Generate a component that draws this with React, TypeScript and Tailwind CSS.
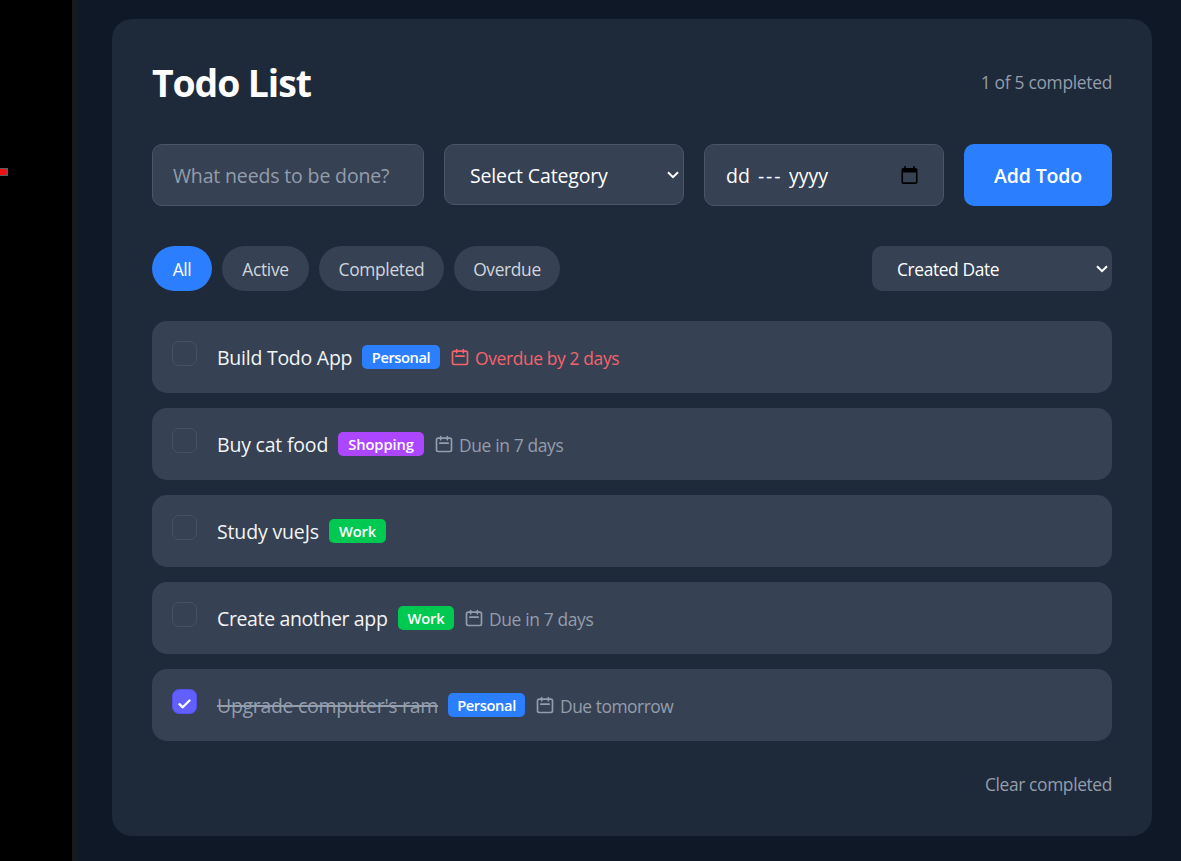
import type { ReactNode } from "react";

type Todo = {
  title: string;
  titleClass: string;
  tag?: string;
  tagClass?: string;
  due?: string;
  dueClass?: string;
  done?: boolean;
};

const todos: Todo[] = [
  {
    title: "Build Todo App",
    titleClass: "w-[135px] tracking-[-0.25px] text-gray-100",
    tag: "Personal",
    tagClass: "w-[78px] bg-[#2b7fff] tracking-[-0.45px]",
    due: "Overdue by 2 days",
    dueClass: "tracking-[-0.36px] text-[#f4646c]",
  },
  {
    title: "Buy cat food",
    titleClass: "w-[111px] tracking-[-0.2px] text-gray-100",
    tag: "Shopping",
    tagClass: "w-[86px] bg-[#ad46ff] tracking-[-0.1px]",
    due: "Due in 7 days",
    dueClass: "tracking-[-0.35px] text-[#949dab]",
  },
  {
    title: "Study vueJs",
    titleClass: "w-[102px] tracking-[-0.15px] text-gray-100",
    tag: "Work",
    tagClass: "w-[57px] bg-[#00c951] tracking-[-0.2px]",
  },
  {
    title: "Create another app",
    titleClass: "w-[171px] tracking-[-0.37px] text-gray-100",
    tag: "Work",
    tagClass: "w-[56px] bg-[#00c951] tracking-[-0.2px]",
    due: "Due in 7 days",
    dueClass: "tracking-[-0.35px] text-[#949dab]",
  },
  {
    title: "Upgrade computer's ram",
    titleClass: "w-[221px] tracking-[-0.31px] text-[#949dab] line-through decoration-2",
    tag: "Personal",
    tagClass: "w-[77px] bg-[#2b7fff] tracking-[-0.4px]",
    due: "Due tomorrow",
    dueClass: "tracking-[-0.47px] text-[#949dab]",
    done: true,
  },
];

function Chevron() {
  return (
    <svg className="h-[8px] w-[12px] shrink-0" viewBox="0 0 12 8" fill="none" stroke="white" strokeWidth="2">
      <path d="M1 1.2 6 6.2 11 1.2" />
    </svg>
  );
}

function CalendarIcon() {
  return (
    <svg className="size-5 shrink-0" viewBox="0 0 24 24" fill="none" stroke="currentColor" strokeWidth="2" strokeLinecap="round" strokeLinejoin="round">
      <path d="M8 7V3m8 4V3m-9 8h10M5 21h14a2 2 0 002-2V7a2 2 0 00-2-2H5a2 2 0 00-2 2v12a2 2 0 002 2z" />
    </svg>
  );
}

function PickerIcon() {
  return (
    <svg className="h-[18px] w-[17px] shrink-0" viewBox="0 0 17 19" fill="black">
      <path fillRule="evenodd" d="M3 0h1.6v2h7.8V0H14v2h1a2 2 0 012 2v13a2 2 0 01-2 2H2a2 2 0 01-2-2V4a2 2 0 012-2h1zM1.7 6.8v10.4h13.6V6.8z" />
    </svg>
  );
}

function Pill({ children, className }: { children: ReactNode; className: string }) {
  return (
    <button className={`h-[45px] rounded-full pt-[2px] text-center text-[17.4px] tracking-[-0.35px] whitespace-nowrap ${className}`}>
      {children}
    </button>
  );
}

function TodoRow({ todo }: { todo: Todo }) {
  return (
    <li className="flex h-[72px] items-start rounded-[15px] bg-[#364153] pl-5">
      <span
        className={`mt-5 flex size-[25px] shrink-0 items-center justify-center rounded-[7px] border ${
          todo.done ? "border-[#5550e8] bg-[#615fff]" : "border-[#465164]"
        }`}
      >
        {todo.done && (
          <svg className="mt-[5px] h-[10px] w-[13px]" viewBox="0 0 13 10" fill="none" stroke="white" strokeWidth="2.3" strokeLinecap="round" strokeLinejoin="round">
            <path d="M1.5 5.2 4.7 8.3 11.5 1.5" />
          </svg>
        )}
      </span>
      <div className="ml-5 flex h-[72px] items-center">
        <span className={`pt-[2px] text-[19.5px] leading-[30px] whitespace-nowrap ${todo.titleClass}`}>
          {todo.title}
        </span>
        {todo.tag && (
          <span
            className={`ml-[10px] flex h-6 items-center justify-center rounded-[5px] pt-px text-[14.7px] font-semibold text-white ${todo.tagClass}`}
          >
            {todo.tag}
          </span>
        )}
        {todo.due && (
          <span className={`ml-[10px] flex items-center gap-[5px] text-[17.4px] whitespace-nowrap ${todo.dueClass}`}>
            <CalendarIcon />
            <span className="pt-[3px]">{todo.due}</span>
          </span>
        )}
      </div>
    </li>
  );
}

export default function App() {
  return (
    <div className="flex h-[861px] w-[1181px] overflow-hidden bg-[#0f1826] font-['Open_Sans',sans-serif]">
      <aside className="w-[78px] shrink-0 border-r-[6px] border-[#161a1a] bg-black pt-[168px]">
        <div className="flex h-2 w-2 items-center bg-[#5c5c5c]">
          <div className="h-[6px] w-[7px] rounded-r-sm bg-[#ee1111]" />
        </div>
      </aside>
      <main className="mt-[19px] ml-[34px] h-[817px] w-[1040px] shrink-0 rounded-[20px] bg-[#1e2939] px-10">
        <header className="flex h-[125px] items-center justify-between">
          <h1 className="mt-[4px] text-[37.4px] font-bold tracking-[-1.1px] text-white">Todo List</h1>
          <p className="mt-[2px] text-[17.4px] tracking-[-0.3px] text-[#949dab]">1 of 5 completed</p>
        </header>
        <div className="flex gap-5">
          <input
            className="h-[62px] w-[272px] rounded-[10px] border border-[#4a5565] bg-[#364153] px-5 pt-px text-[19.5px] tracking-[-0.15px] text-white placeholder:text-[#949dab]"
            placeholder="What needs to be done?"
          />
          <button className="flex h-[61px] w-[240px] items-center justify-between rounded-[10px] border border-[#4a5565] bg-[#364153] pr-[4px] pl-[25px] text-[19.5px] tracking-[-0.15px] text-white">
            <span className="pt-[3px]">Select Category</span>
            <Chevron />
          </button>
          <div className="flex h-[62px] w-[240px] items-center justify-between rounded-[10px] border border-[#4a5565] bg-[#364153] pr-[25px] pl-[21px] text-[19.5px] text-white">
            <span className="flex pt-[2px]">
              <span className="w-[32px]">dd</span>
              <span className="w-[31px] tracking-[1.8px]">---</span>
              <span>yyyy</span>
            </span>
            <PickerIcon />
          </div>
          <button className="h-[62px] w-[148px] rounded-[10px] bg-[#2b7fff] pt-[2px] text-[19.5px] font-semibold tracking-[-0.15px] text-white">
            Add Todo
          </button>
        </div>
        <div className="mt-10 flex items-center justify-between">
          <nav className="flex gap-[10px]">
            <Pill className="w-[60px] bg-[#2b7fff] text-white">All</Pill>
            <Pill className="w-[87px] bg-[#364153] text-[#d1d5dc]">Active</Pill>
            <Pill className="w-[125px] bg-[#364153] text-[#d1d5dc]">Completed</Pill>
            <Pill className="w-[106px] bg-[#364153] text-[#d1d5dc]">Overdue</Pill>
          </nav>
          <button className="flex h-[45px] w-[240px] items-center justify-between rounded-[10px] bg-[#364153] pr-[4px] pl-[25px] text-[17.4px] tracking-[-0.4px] text-white">
            <span className="pt-[2px]">Created Date</span>
            <Chevron />
          </button>
        </div>
        <ul className="mt-[30px] flex flex-col gap-[15px]">
          {todos.map((todo) => (
            <TodoRow key={todo.title} todo={todo} />
          ))}
        </ul>
        <footer className="mt-[30px] flex justify-end">
          <button className="text-[17.4px] tracking-[-0.38px] text-[#949dab]">Clear completed</button>
        </footer>
      </main>
    </div>
  );
}
